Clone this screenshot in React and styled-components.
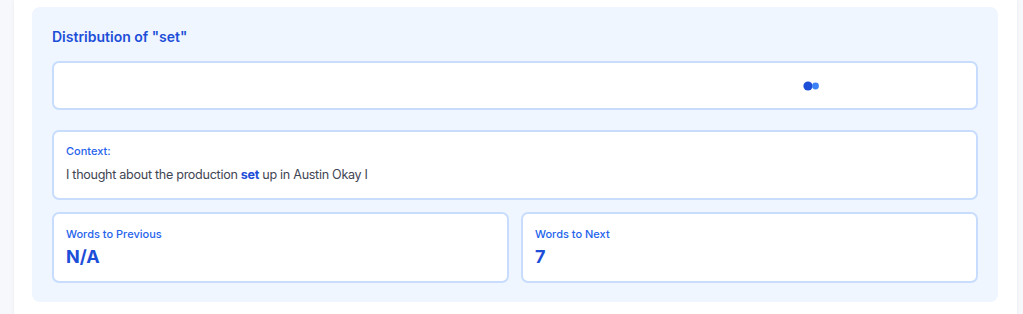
import React from "react";
import styled, { createGlobalStyle } from "styled-components";

const GlobalStyle = createGlobalStyle`
  html, body {
    margin: 0;
    padding: 0;
    background: #f7f8fb;
    font-family: Inter, "Noto Sans", "Liberation Sans", sans-serif;
  }
  * { box-sizing: border-box; }
`;

const Page = styled.div`
  padding: 0 6px 0 14px;
  height: 314px;
  overflow: hidden;
`;

const Card = styled.div`
  background: #ffffff;
  box-shadow: 0 0 4px rgba(15, 23, 42, 0.06);
  padding: 7px 19px 20px 18px;
  min-height: 314px;
`;

const Panel = styled.section`
  background: #eff6ff;
  border-radius: 8px;
  padding: 20px 20px 19px;
  display: flex;
  flex-direction: column;
`;

const Title = styled.h3`
  margin: 0 0 14px;
  font-size: 14px;
  line-height: 20px;
  font-weight: 600;
  color: #1d4ed8;
`;

const Box = styled.div`
  background: #ffffff;
  border: 2px solid #c8ddfd;
  border-radius: 7px;
  padding: ${(p) => p.$pad || "10px 12px 12px"};
`;

const ChartBox = styled(Box)`
  height: 49px;
  position: relative;
  margin-bottom: 20px;
  padding: 0;
`;

const Dots = styled.svg`
  position: absolute;
  left: 748px;
  top: 17px;
`;

const Label = styled.div`
  font-size: 11px;
  line-height: 16px;
  font-weight: 500;
  color: #2563eb;
  margin-bottom: ${(p) => p.$gap || "4px"};
`;

const Sentence = styled.p`
  margin: 0;
  font-size: 12.6px;
  line-height: 20px;
  letter-spacing: -0.3px;
  color: #3f4654;
`;

const Hit = styled.strong`
  font-weight: 700;
  color: #1d4ed8;
`;

const StatGrid = styled.div`
  display: grid;
  grid-template-columns: 1fr 1fr;
  gap: 12px;
  margin-top: 12px;
`;

const Value = styled.div`
  font-size: 18px;
  line-height: 28px;
  font-weight: 700;
  color: #1d4ed8;
`;

const stats = [
  { label: "Words to Previous", value: "N/A" },
  { label: "Words to Next", value: "7" },
];

export default function App() {
  return (
    <>
      <GlobalStyle />
      <Page>
        <Card>
          <Panel>
            <Title>Distribution of "set"</Title>
            <ChartBox>
              <Dots width="24" height="12" viewBox="0 0 24 12">
                <circle cx="6" cy="6" r="4.6" fill="#1d4ed8" />
                <circle cx="13.5" cy="6" r="3.4" fill="#3b82f6" />
              </Dots>
            </ChartBox>
            <Box $pad="11px 12px 13px">
              <Label $gap="6px">Context:</Label>
              <Sentence>
                I thought about the production <Hit>set</Hit> up in Austin Okay I
              </Sentence>
            </Box>
            <StatGrid>
              {stats.map((s) => (
                <Box key={s.label} $pad="12px 12px 10px">
                  <Label $gap="1px">{s.label}</Label>
                  <Value>{s.value}</Value>
                </Box>
              ))}
            </StatGrid>
          </Panel>
        </Card>
      </Page>
    </>
  );
}
